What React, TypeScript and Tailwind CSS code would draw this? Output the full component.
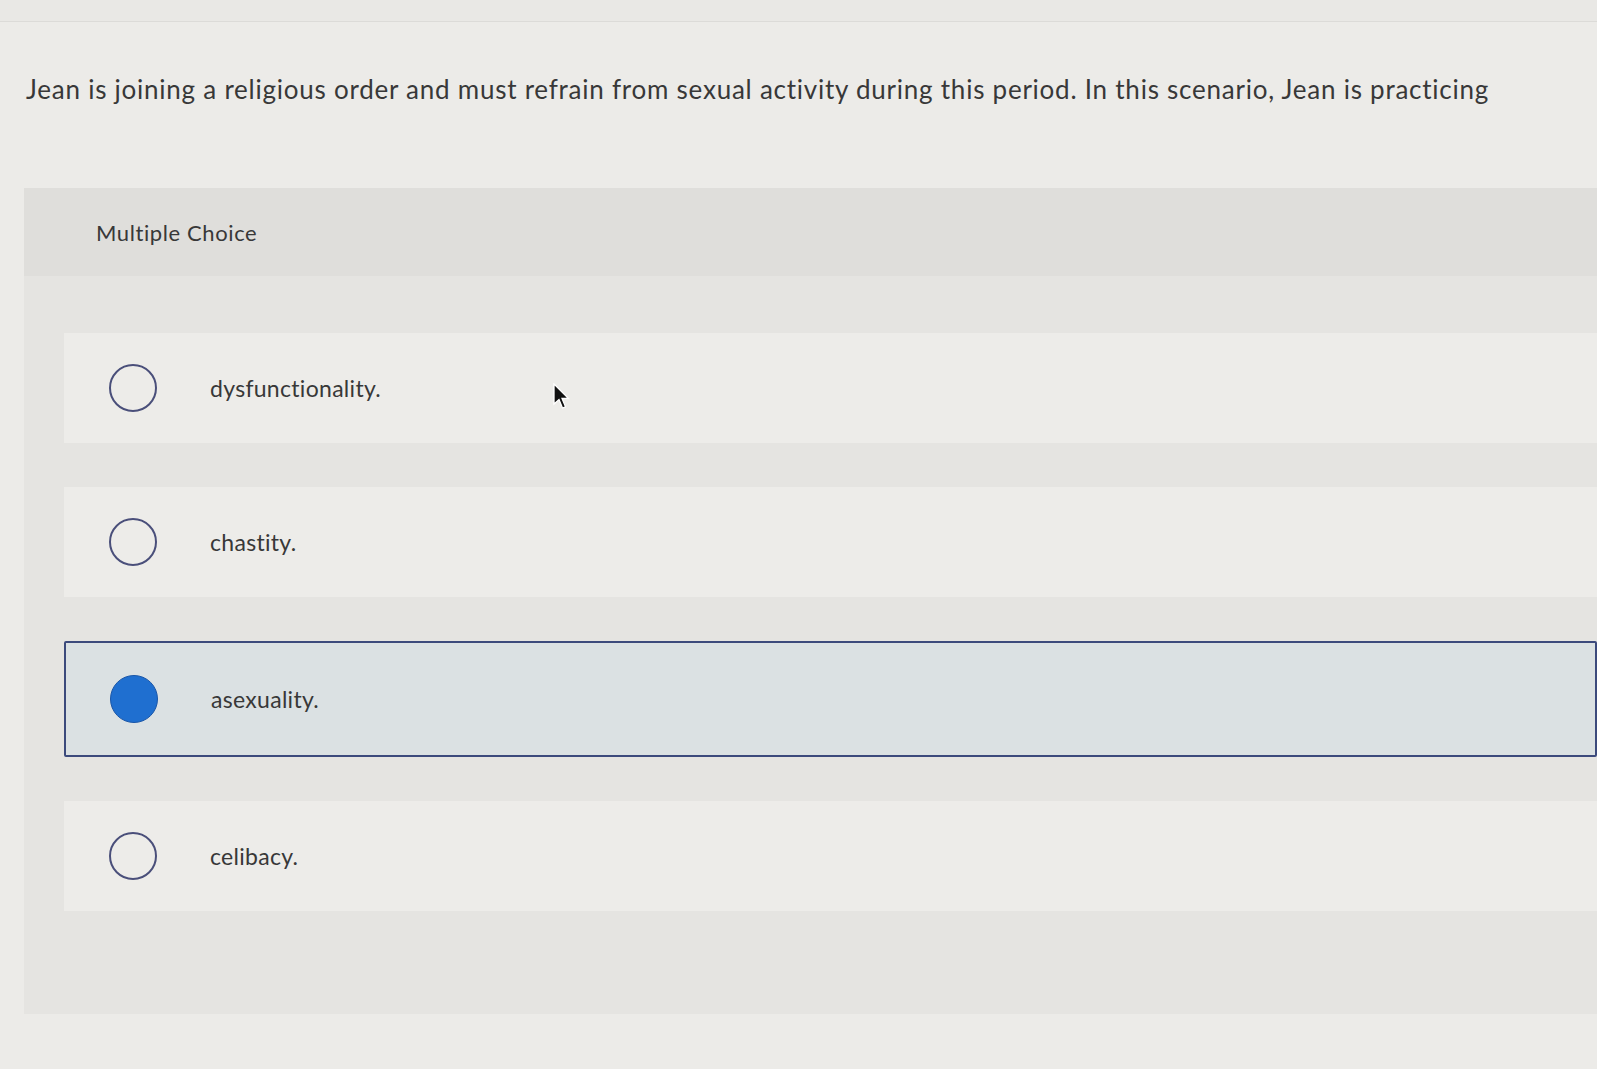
import React from 'react'

const options = [
  { label: 'dysfunctionality.', selected: false },
  { label: 'chastity.', selected: false },
  { label: 'asexuality.', selected: true },
  { label: 'celibacy.', selected: false },
]

function Radio({ selected }: { selected: boolean }) {
  if (selected) {
    return <span className="block w-[48px] h-[48px] shrink-0 rounded-full bg-[#1f6fd0] border border-[#1a56a8]" />
  }
  return <span className="block w-[48px] h-[48px] shrink-0 rounded-full border-2 border-[#4a4f7a] bg-transparent" />
}

export default function App() {
  return (
    <div
      className="relative w-full h-[1069px] overflow-hidden bg-[#ecebe8] text-[#333333]"
      style={{ fontFamily: 'Lato, "Open Sans", sans-serif' }}
    >
      <div className="h-[22px] border-b border-[#dcdbd8] bg-[#e9e8e5]" />

      {/* Question */}
      <p className="pl-[26px] pt-[51px] text-[26px] leading-[32px] tracking-[0.76px] text-[#383838] whitespace-nowrap">
        Jean is joining a religious order and must refrain from sexual activity during this period. In this scenario, Jean is practicing
      </p>

      {/* Answer panel */}
      <div className="ml-[24px] mt-[83px] bg-[#e5e4e1] h-[826px]">
        <div className="h-[88px] bg-[#dfdedb] flex items-center pl-[72px]">
          <span className="text-[22px] tracking-[0.6px] text-[#383838]">Multiple Choice</span>
        </div>

        <div className="pl-[40px] pt-[57px] flex flex-col gap-[44px]">
          {options.map((o) => (
            <div
              key={o.label}
              className={
                o.selected
                  ? 'h-[116px] flex items-center pl-[44px] bg-[#dbe1e3] border-2 border-[#3c4a7c] rounded-[2px]'
                  : 'h-[110px] flex items-center pl-[45px] bg-[#edece9]'
              }
            >
              <Radio selected={o.selected} />
              <span className="ml-[53px] text-[23px] tracking-[0.3px] text-[#383838]">{o.label}</span>
            </div>
          ))}
        </div>
      </div>

      {/* mouse cursor */}
      <svg className="absolute left-[553px] top-[383px]" width="18" height="28" viewBox="0 0 18 28">
        <path d="M1 1 L1 21 L6 16.5 L9.5 25 L12.5 23.8 L9 15.5 L15.5 15.5 Z" fill="#111" stroke="#fff" strokeWidth="1.3" />
      </svg>
    </div>
  )
}
